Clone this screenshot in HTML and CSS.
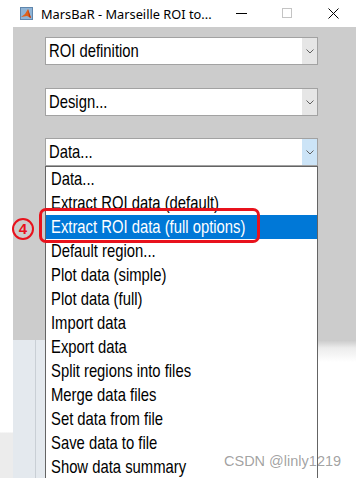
FILE: index.html
```html
<!DOCTYPE html>
<html>
<head>
<meta charset="utf-8">
<link rel="stylesheet" href="styles.css">
</head>
<body>
<div class="window">
  <div class="titlebar">
    <svg class="appicon" width="13" height="13" viewBox="0 0 13 13">
      <rect x="0" y="0" width="13" height="13" fill="#8fb4d6"/>
      <rect x="0.5" y="0.5" width="12" height="12" fill="none" stroke="#5f86ad"/>
      <path d="M1 10 L5 7 L8 2 L11 11 L7 9 Z" fill="#e0611a"/>
      <path d="M8 2 L11 11 L9 10 Z" fill="#b8380f"/>
    </svg>
    <span class="title">MarsBaR - Marseille ROI to...</span>
    <div class="controls">
      <span class="ctl"><svg width="11" height="11" viewBox="0 0 11 11"><line x1="0" y1="5.5" x2="11" y2="5.5" stroke="#000" stroke-width="1"/></svg></span>
      <span class="ctl"><svg width="11" height="11" viewBox="0 0 11 11"><rect x="0.5" y="0.5" width="9" height="9" fill="none" stroke="#c4c4c4"/></svg></span>
      <span class="ctl"><svg width="11" height="11" viewBox="0 0 11 11"><path d="M0.5 0.5 L10.5 10.5 M10.5 0.5 L0.5 10.5" stroke="#000" stroke-width="1"/></svg></span>
    </div>
  </div>
  <div class="main">
    <div class="edge"></div>
    <div class="panel">
      <div class="select"><span class="val"><span class="t">ROI definition</span></span><span class="arrow"><svg width="8" height="5" viewBox="0 0 8 5"><path d="M0.5 0.5 L4 4 L7.5 0.5" fill="none" stroke="#606060"/></svg></span></div>
      <div class="select"><span class="val"><span class="t">Design...</span></span><span class="arrow"><svg width="8" height="5" viewBox="0 0 8 5"><path d="M0.5 0.5 L4 4 L7.5 0.5" fill="none" stroke="#606060"/></svg></span></div>
      <div class="select open"><span class="val"><span class="t">Data...</span></span><span class="arrow"><svg width="8" height="5" viewBox="0 0 8 5"><path d="M0.5 0.5 L4 4 L7.5 0.5" fill="none" stroke="#606060"/></svg></span></div>
    </div>
  </div>
  <div class="below">
    <div class="edge2"></div>
    <div class="strip"><div class="strip-a"></div><div class="strip-b"></div></div>
    <div class="shadow"></div>
  </div>

  <ul class="list">
    <li><span class="t">Data...</span></li>
    <li><span class="t">Extract ROI data (default)</span></li>
    <li class="sel"><span class="t">Extract ROI data (full options)</span></li>
    <li><span class="t">Default region...</span></li>
    <li><span class="t">Plot data (simple)</span></li>
    <li><span class="t">Plot data (full)</span></li>
    <li><span class="t">Import data</span></li>
    <li><span class="t">Export data</span></li>
    <li><span class="t">Split regions into files</span></li>
    <li><span class="t">Merge data files</span></li>
    <li><span class="t">Set data from file</span></li>
    <li><span class="t">Save data to file</span></li>
    <li><span class="t">Show data summary</span></li>
  </ul>

  <div class="mark-num">4</div>
  <div class="mark-box"></div>
  <div class="watermark">CSDN @linly1219</div>
</div>
</body>
</html>
```
FILE: styles.css
```css
html, body {
  margin: 0;
  padding: 0;
  background: #ffffff;
}
.window {
  position: relative;
  width: 356px;
  height: 478px;
  overflow: hidden;
  font-family: "Liberation Sans", Arial, sans-serif;
}
.t {
  display: inline-block;
  transform: scaleX(0.78);
  transform-origin: 0 50%;
}
.titlebar {
  height: 27px;
  display: flex;
  align-items: center;
  background: #ffffff;
  padding-left: 20px;
  font-family: "Noto Sans", "Open Sans", sans-serif;
  font-size: 12.8px;
  color: #000;
}
.appicon {
  flex: none;
  margin-right: 8px;
}
.title {
  flex: none;
  white-space: nowrap;
}
.controls {
  margin-left: auto;
  display: flex;
  align-items: center;
}
.ctl {
  width: 46px;
  display: flex;
  justify-content: center;
}
.main {
  display: flex;
  height: 313px;
}
.edge {
  width: 13px;
  background: #ffffff;
}
.panel {
  flex: 1;
  background: #cccccc;
  padding: 10px 0 0 32px;
  display: flex;
  flex-direction: column;
  gap: 22px;
}
.select {
  width: 271px;
  height: 26px;
  border: 1px solid #a2a2a2;
  background: #ffffff;
  display: flex;
  align-items: center;
  font-size: 19px;
  color: #000;
}
.select:nth-child(2) { margin-top: 1px; }
.select .val {
  flex: 1;
  padding-left: 3px;
  white-space: nowrap;
}
.select .arrow {
  width: 15px;
  height: 100%;
  background: #e6e6e6;
  display: flex;
  align-items: center;
  justify-content: center;
}
.select.open .arrow {
  background: #cce4f7;
}
.below {
  display: flex;
  height: 138px;
}
.edge2 {
  width: 13px;
  background: linear-gradient(#ffffff 0, #ffffff 92px, #ececec 93px);
}
.strip {
  width: 32px;
  display: flex;
}
.strip-a {
  width: 22px;
  background: #e4e9ee;
  border-right: 1px solid #c9cfd5;
}
.strip-b {
  flex: 1;
  background: #e4e9ee;
}
.shadow {
  flex: 1;
  background: linear-gradient(#c9c9c9 0, #ececec 8px, #ffffff 22px);
}
.list {
  position: absolute;
  left: 45px;
  top: 166px;
  width: 271px;
  margin: 0;
  padding: 0;
  list-style: none;
  background: #ffffff;
  border: 1px solid #646464;
  font-size: 19px;
  color: #000;
}
.list li {
  height: 24px;
  line-height: 24px;
  padding-left: 5px;
  white-space: nowrap;
}
.list li.sel {
  background: #0078d7;
  color: #ffffff;
}
.mark-num {
  position: absolute;
  left: 12px;
  top: 218px;
  width: 18px;
  height: 18px;
  border: 2px solid #e8121c;
  border-radius: 50%;
  color: #e8121c;
  font-family: "Liberation Sans", sans-serif;
  font-weight: bold;
  font-size: 15px;
  line-height: 18px;
  text-align: center;
}
.mark-box {
  position: absolute;
  left: 39px;
  top: 208px;
  width: 215px;
  height: 29px;
  border: 3px solid #e8121c;
  border-radius: 7px;
}
.watermark {
  position: absolute;
  left: 224px;
  top: 453px;
  font-family: "Liberation Sans", sans-serif;
  font-size: 14.5px;
  color: rgba(110, 110, 110, 0.65);
  white-space: nowrap;
}
```
